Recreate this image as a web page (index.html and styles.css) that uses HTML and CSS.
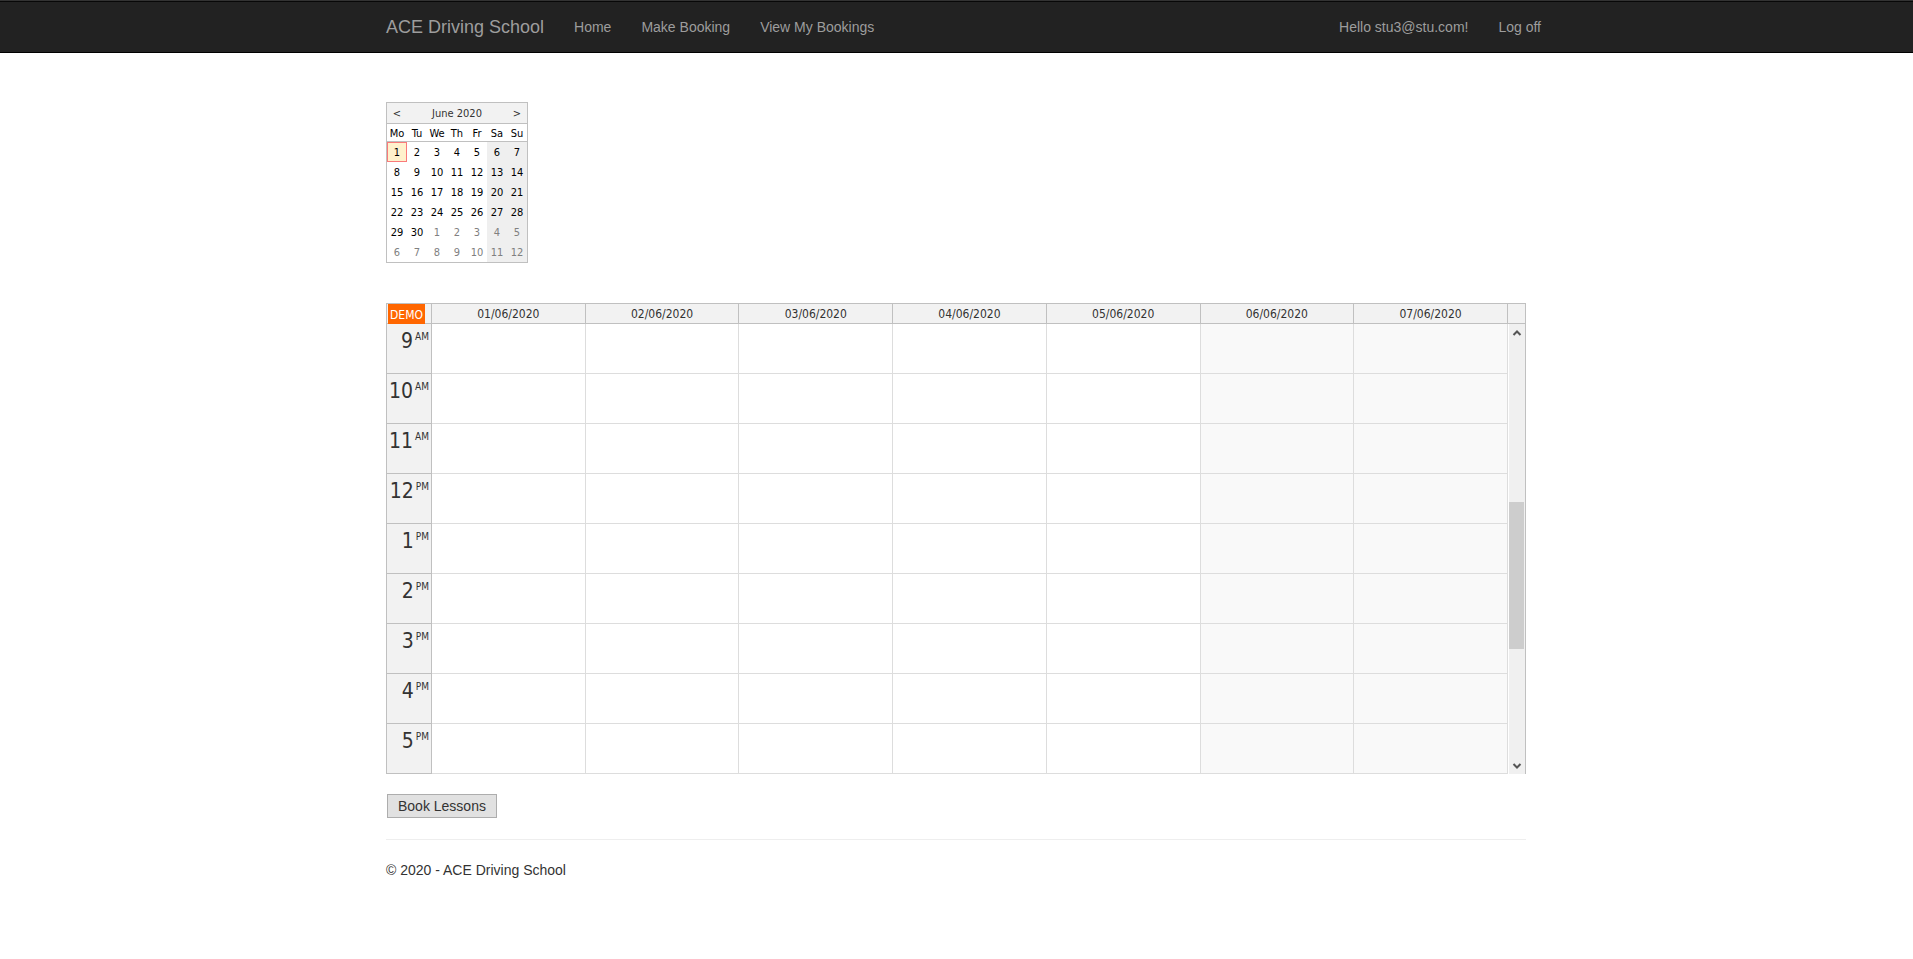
FILE: index.html
```html
<!DOCTYPE html>
<html lang="en">
<head>
<meta charset="utf-8">
<title>Make Booking - ACE Driving School</title>
<link rel="stylesheet" href="styles.css">
</head>
<body>
<header class="navbar">
  <nav class="container navbar-row">
    <a class="brand" href="#">ACE Driving School</a>
    <a class="nav-link" href="#">Home</a>
    <a class="nav-link" href="#">Make Booking</a>
    <a class="nav-link" href="#">View My Bookings</a>
    <a class="nav-link nav-user" href="#">Hello stu3@stu.com!</a>
    <a class="nav-link" href="#">Log off</a>
  </nav>
</header>
<main class="container">
  <section class="month">
    <div class="month-title"><button type="button" class="month-step">&lt;</button><span>June 2020</span><button type="button" class="month-step">&gt;</button></div>
    <table class="month-grid">
      <thead><tr><th>Mo</th><th>Tu</th><th>We</th><th>Th</th><th>Fr</th><th>Sa</th><th>Su</th></tr></thead>
      <tbody>
        <tr><td class="selected">1</td><td>2</td><td>3</td><td>4</td><td>5</td><td class="weekend">6</td><td class="weekend">7</td></tr>
        <tr><td>8</td><td>9</td><td>10</td><td>11</td><td>12</td><td class="weekend">13</td><td class="weekend">14</td></tr>
        <tr><td>15</td><td>16</td><td>17</td><td>18</td><td>19</td><td class="weekend">20</td><td class="weekend">21</td></tr>
        <tr><td>22</td><td>23</td><td>24</td><td>25</td><td>26</td><td class="weekend">27</td><td class="weekend">28</td></tr>
        <tr><td>29</td><td>30</td><td class="other">1</td><td class="other">2</td><td class="other">3</td><td class="weekend other">4</td><td class="weekend other">5</td></tr>
        <tr><td class="other">6</td><td class="other">7</td><td class="other">8</td><td class="other">9</td><td class="other">10</td><td class="weekend other">11</td><td class="weekend other">12</td></tr>
      </tbody>
    </table>
  </section>
  <section class="planner">
    <table class="week">
      <thead>
        <tr><th class="corner"><div class="demo">DEMO</div></th><th>01/06/2020</th><th>02/06/2020</th><th>03/06/2020</th><th>04/06/2020</th><th>05/06/2020</th><th>06/06/2020</th><th>07/06/2020</th></tr>
      </thead>
      <tbody>
        <tr><th><div class="hour">9<span>AM</span></div></th><td></td><td></td><td></td><td></td><td></td><td class="off"></td><td class="off"></td></tr>
        <tr><th><div class="hour">10<span>AM</span></div></th><td></td><td></td><td></td><td></td><td></td><td class="off"></td><td class="off"></td></tr>
        <tr><th><div class="hour">11<span>AM</span></div></th><td></td><td></td><td></td><td></td><td></td><td class="off"></td><td class="off"></td></tr>
        <tr><th><div class="hour">12<span>PM</span></div></th><td></td><td></td><td></td><td></td><td></td><td class="off"></td><td class="off"></td></tr>
        <tr><th><div class="hour">1<span>PM</span></div></th><td></td><td></td><td></td><td></td><td></td><td class="off"></td><td class="off"></td></tr>
        <tr><th><div class="hour">2<span>PM</span></div></th><td></td><td></td><td></td><td></td><td></td><td class="off"></td><td class="off"></td></tr>
        <tr><th><div class="hour">3<span>PM</span></div></th><td></td><td></td><td></td><td></td><td></td><td class="off"></td><td class="off"></td></tr>
        <tr><th><div class="hour">4<span>PM</span></div></th><td></td><td></td><td></td><td></td><td></td><td class="off"></td><td class="off"></td></tr>
        <tr><th><div class="hour">5<span>PM</span></div></th><td></td><td></td><td></td><td></td><td></td><td class="off"></td><td class="off"></td></tr>
      </tbody>
    </table>
    <div class="scroll">
      <div class="scroll-head"></div>
      <div class="scroll-track">
        <svg class="arrow" viewBox="0 0 16 17" aria-hidden="true"><path d="M4.500 11L8 7.500L11.500 11"/></svg>
        <div class="space-above"></div>
        <div class="thumb"></div>
        <div class="space-below"></div>
        <svg class="arrow" viewBox="0 0 16 17" aria-hidden="true"><path d="M4.500 7L8 10.500L11.500 7"/></svg>
      </div>
    </div>
  </section>
  <button type="button" class="book">Book Lessons</button>
  <hr>
  <footer>© 2020 - ACE Driving School</footer>
</main>
</body>
</html>
```

FILE: styles.css
```css
* { box-sizing: border-box; }
body {
  margin: 0;
  background: #fff;
  color: #333;
  font: 14px/20px "Liberation Sans", Arial, sans-serif;
}
.container {
  max-width: 1171px;
  margin: 0 auto;
  padding: 0 16px 0 15px;
}
.navbar {
  background: #222;
  border-top: 1px solid #333;
  border-bottom: 1px solid #000;
  box-shadow: inset 0 1px #080808;
}
.navbar-row {
  display: flex;
  align-items: center;
  height: 51px;
}
.brand, .nav-link {
  color: #9d9d9d;
  text-decoration: none;
  white-space: nowrap;
}
.brand { font-size: 18px; margin-right: 15px; }
.nav-link { padding: 15px; }
.nav-user { margin-left: auto; }
.nav-link:last-child { margin-right: -30px; }

.month, .planner { font-family: Tahoma, "DejaVu Sans Condensed", "DejaVu Sans", sans-serif; }
.month {
  width: 142px;
  margin-top: 49px;
  border: 1px solid #c0c0c0;
  color: #000;
  font-size: 11px;
  line-height: 14px;
}
.month-title {
  display: flex;
  align-items: center;
  justify-content: space-between;
  height: 21px;
  padding-top: 2px;
  border-bottom: 1px solid #c0c0c0;
  background: #f2f2f2;
  color: #333;
}
.month-step {
  width: 20px;
  padding: 0;
  border: 0;
  background: none;
  color: inherit;
  font: inherit;
}
.month-grid {
  width: 100%;
  table-layout: fixed;
  border-collapse: separate;
  border-spacing: 0;
}
.month-grid th, .month-grid td {
  padding: 2px 0 0;
  text-align: center;
  font-weight: normal;
}
.month-grid th { height: 18px; border-bottom: 1px solid #c0c0c0; }
.month-grid td { height: 20px; }
.month-grid .weekend { background: #efefef; }
.month-grid .other { color: #808080; }
.month-grid .selected { background: #fff1cc; border: 1px solid #fa7a7a; }

.planner { display: flex; margin-top: 40px; }
.week {
  flex: 1;
  table-layout: fixed;
  border-collapse: separate;
  border-spacing: 0;
  border-top: 1px solid #c0c0c0;
  border-left: 1px solid #c0c0c0;
}
.week th, .week td { padding: 0; }
.week th {
  background: #f2f2f2;
  border-right: 1px solid #c0c0c0;
  border-bottom: 1px solid #c0c0c0;
  font-size: 12px;
  font-weight: normal;
  line-height: 18px;
}
.week thead th { height: 20px; }
.week .corner { width: 45px; }
.demo {
  width: 37px;
  height: 20px;
  margin: 0 0 -1px 1px;
  padding-top: 2px;
  background: #f60;
  color: #fff;
}
.week tbody th { vertical-align: top; }
.week td {
  height: 50px;
  border-right: 1px solid #ddd;
  border-bottom: 1px solid #ddd;
}
.week .off { background: #f9f9f9; }
.hour {
  display: flex;
  justify-content: flex-end;
  gap: 2px;
  padding: 4px 2px 0 0;
  font-size: 21px;
  line-height: 26px;
}
.hour span { font-size: 10px; line-height: 18px; }
.scroll {
  display: flex;
  flex-direction: column;
  width: 18px;
  border-right: 1px solid #c0c0c0;
}
.scroll-head {
  height: 21px;
  border-top: 1px solid #c0c0c0;
  border-bottom: 1px solid #c0c0c0;
  background: #f2f2f2;
}
.scroll-track {
  display: flex;
  flex: 1;
  flex-direction: column;
  margin-left: 1px;
  background: #f0f0f0;
}
.arrow { width: 16px; height: 17px; fill: none; stroke: #555; stroke-width: 2; }
.space-above { flex: 161; }
.thumb { flex: 147; width: 15px; background: #cdcdcd; }
.space-below { flex: 108; }

.book {
  display: block;
  margin: 20px 0 0 1px;
  padding: 1px 10px;
  border: 1px solid #adadad;
  background: #e1e1e1;
  color: #333;
  font: inherit;
}
hr {
  margin: 21px 0 20px;
  border: 0;
  border-top: 1px solid #eee;
}
```
